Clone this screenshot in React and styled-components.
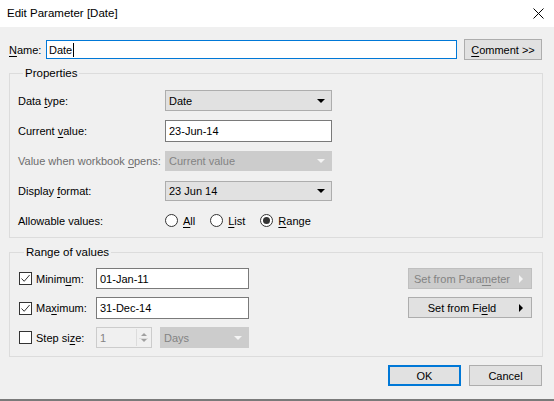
import React from 'react'
import styled, { createGlobalStyle } from 'styled-components'

const GlobalStyle = createGlobalStyle`
  html, body {
    margin: 0;
    padding: 0;
    background: #ffffff;
  }
  body {
    font-family: "Segoe UI", "Liberation Sans", Arial, sans-serif;
    font-size: 11px;
    color: #000;
  }
  * { box-sizing: border-box; }
`

const Window = styled.div`
  width: 554px;
  height: 401px;
  overflow: hidden;
  display: flex;
  flex-direction: column;
  border-bottom: 2px solid #7a7a7a;
  white-space: nowrap;
`

const TitleBar = styled.div`
  height: 27px;
  flex: none;
  background: #fff;
  display: flex;
  align-items: center;
  justify-content: space-between;
  padding: 0 10px 1px 7px;
  font-size: 11.5px;
`

const Body = styled.div`
  flex: 1;
  background: #f0f0f0;
  padding: 12px 11px 0 9px;
  display: flex;
  flex-direction: column;
`

const NameRow = styled.div`
  display: flex;
  align-items: center;
  height: 21px;
`

const NameLabel = styled.label`
  width: 37px;
`

const TextBox = styled.div`
  height: ${p => p.$h || 21}px;
  width: ${p => p.$w}px;
  background: ${p => (p.$disabled ? '#f0f0f0' : '#fff')};
  border: 1px solid ${p => (p.$focus ? '#0078d7' : p.$disabled ? '#cccccc' : '#7a7a7a')};
  color: ${p => (p.$disabled ? '#838383' : '#000')};
  display: flex;
  align-items: center;
  padding-left: ${p => (p.$focus ? 2 : 3)}px;
  position: relative;
  flex: none;
`

const Caret = styled.span`
  display: inline-block;
  width: 1px;
  height: 14px;
  background: #000;
  margin-left: 1px;
`

const Button = styled.div`
  width: ${p => p.$w}px;
  height: 21px;
  flex: none;
  background: ${p => (p.$disabled ? '#cccccc' : '#e1e1e1')};
  border: ${p => (p.$default ? '2px solid #0078d7' : `1px solid ${p.$disabled ? '#bfbfbf' : '#adadad'}`)};
  color: ${p => (p.$disabled ? '#838383' : '#000')};
  display: flex;
  align-items: center;
  justify-content: center;
  padding-right: ${p => (p.$menu ? 16 : 0)}px;
  position: relative;
`

const ButtonArrow = styled.span`
  position: absolute;
  right: 8px;
  top: 50%;
  margin-top: -4px;
  width: 0;
  height: 0;
  border-top: 4px solid transparent;
  border-bottom: 4px solid transparent;
  border-left: 4px solid ${p => (p.$disabled ? '#f4f4f4' : '#000')};
`

const Group = styled.fieldset`
  margin: ${p => p.$top}px 0 0 0;
  border: 1px solid #dcdcdc;
  padding: ${p => p.$pad};
  min-width: 0;
`

const Legend = styled.legend`
  margin-left: 5px;
  padding: 0 2px;
  line-height: 16px;
  font-size: 11.5px;
`

const PropRows = styled.div`
  display: flex;
  flex-direction: column;
  gap: 9px;
`

const PropRow = styled.div`
  display: grid;
  grid-template-columns: 147px 167px;
  align-items: center;
  height: 21px;
  color: ${p => (p.$disabled ? '#6d6d6d' : '#000')};
`

const Select = styled.div`
  height: ${p => p.$h || 21}px;
  width: ${p => (p.$w ? `${p.$w}px` : '100%')};
  flex: none;
  background: ${p => (p.$disabled ? '#cccccc' : '#e1e1e1')};
  border: 1px solid ${p => (p.$disabled ? '#cccccc' : '#adadad')};
  color: ${p => (p.$disabled ? '#838383' : '#000')};
  display: flex;
  align-items: center;
  justify-content: space-between;
  padding: 0 6px 0 3px;
`

const SelectArrow = styled.span`
  width: 0;
  height: 0;
  border-left: 4px solid transparent;
  border-right: 4px solid transparent;
  border-top: 4px solid ${p => (p.$disabled ? '#f4f4f4' : '#000')};
  margin-top: 1px;
`

const Radios = styled.div`
  display: flex;
  align-items: center;
  gap: 15px;
`

const RadioItem = styled.span`
  display: flex;
  align-items: center;
  gap: 5px;
`

const RadioCircle = styled.span`
  width: 13px;
  height: 13px;
  border-radius: 50%;
  border: 1px solid #333;
  background: #fff;
  display: flex;
  align-items: center;
  justify-content: center;
  &::after {
    content: '';
    width: 7px;
    height: 7px;
    border-radius: 50%;
    background: ${p => (p.$on ? '#333' : 'transparent')};
  }
`

const RangeBody = styled.div`
  display: flex;
  justify-content: space-between;
`

const RangeRows = styled.div`
  display: flex;
  flex-direction: column;
  gap: 8.5px;
`

const RangeRow = styled.div`
  display: flex;
  align-items: center;
  height: 21px;
`

const CheckCell = styled.label`
  width: 77px;
  display: flex;
  align-items: center;
  gap: 4px;
`

const CheckBox = styled.span`
  width: 13px;
  height: 13px;
  border: 1px solid #333;
  background: #fff;
  display: flex;
  align-items: center;
  justify-content: center;
`

const StepControls = styled.div`
  display: flex;
  gap: 8px;
`

const Spin = styled.span`
  position: absolute;
  right: 1px;
  top: 1px;
  bottom: 1px;
  width: 14px;
  border-left: 1px solid #dcdcdc;
  display: flex;
  flex-direction: column;
  align-items: center;
  justify-content: center;
  gap: 3px;
`

const SpinLine = styled.span`
  position: absolute;
  left: 2px;
  right: 2px;
  top: 50%;
  height: 1px;
  background: #dcdcdc;
`

const SpinTri = styled.span`
  width: 0;
  height: 0;
  border-left: 3px solid transparent;
  border-right: 3px solid transparent;
  ${p => (p.$up ? 'border-bottom: 3px solid #a0a0a0;' : 'border-top: 3px solid #a0a0a0;')}
`

const RangeButtons = styled.div`
  display: flex;
  flex-direction: column;
  gap: 8px;
`

const Footer = styled.div`
  display: flex;
  justify-content: flex-end;
  gap: 8px;
  margin-top: 8px;
  padding-right: 1px;
`

const U = styled.span`
  text-decoration: underline;
  text-underline-offset: 2px;
`

const Check = () => (
  <svg width="11" height="11" viewBox="0 0 11 11">
    <polyline points="1.5,5.5 4.2,8.3 9.6,2" fill="none" stroke="#333" strokeWidth="1" />
  </svg>
)

const CloseIcon = () => (
  <svg width="11" height="11" viewBox="0 0 11 11">
    <path d="M0.5 0.5 L10.5 10.5 M10.5 0.5 L0.5 10.5" stroke="#000" strokeWidth="1" />
  </svg>
)

export default function App() {
  return (
    <>
      <GlobalStyle />
      <Window>
        <TitleBar>
          <span>Edit Parameter [Date]</span>
          <CloseIcon />
        </TitleBar>
        <Body>
          <NameRow>
            <NameLabel><U>N</U>ame:</NameLabel>
            <TextBox $w={411} $h={19} $focus>
              Date<Caret />
            </TextBox>
            <Button $w={78} style={{ marginLeft: 7 }}><span><U>C</U>omment &gt;&gt;</span></Button>
          </NameRow>

          <Group $top={5} $pad="9px 0 6px 8px">
            <Legend>Properties</Legend>
            <PropRows>
              <PropRow>
                <span>Data <U>t</U>ype:</span>
                <Select>Date<SelectArrow /></Select>
              </PropRow>
              <PropRow>
                <span>Current <U>v</U>alue:</span>
                <TextBox $w={167} $h={22}>23-Jun-14</TextBox>
              </PropRow>
              <PropRow $disabled>
                <span>Value when workbook <U>o</U>pens:</span>
                <Select $disabled $h={20}>Current value<SelectArrow $disabled /></Select>
              </PropRow>
              <PropRow>
                <span>Display <U>f</U>ormat:</span>
                <Select $h={20}>23 Jun 14<SelectArrow /></Select>
              </PropRow>
              <PropRow>
                <span>Allowable values:</span>
                <Radios>
                  <RadioItem><RadioCircle /><span><U>A</U>ll</span></RadioItem>
                  <RadioItem><RadioCircle /><span><U>L</U>ist</span></RadioItem>
                  <RadioItem><RadioCircle $on /><span><U>R</U>ange</span></RadioItem>
                </Radios>
              </PropRow>
            </PropRows>
          </Group>

          <Group $top={6} $pad="8px 10px 8px 9px">
            <Legend>Range of values</Legend>
            <RangeBody>
              <RangeRows>
                <RangeRow>
                  <CheckCell><CheckBox><Check /></CheckBox><span>Minim<U>u</U>m:</span></CheckCell>
                  <TextBox $w={153}>01-Jan-11</TextBox>
                </RangeRow>
                <RangeRow>
                  <CheckCell><CheckBox><Check /></CheckBox><span>Ma<U>x</U>imum:</span></CheckCell>
                  <TextBox $w={153} $h={22}>31-Dec-14</TextBox>
                </RangeRow>
                <RangeRow>
                  <CheckCell><CheckBox /><span>Step si<U>z</U>e:</span></CheckCell>
                  <StepControls>
                    <TextBox $w={56} $disabled>
                      1
                      <Spin>
                        <SpinLine />
                        <SpinTri $up />
                        <SpinTri />
                      </Spin>
                    </TextBox>
                    <Select $w={89} $disabled>Days<SelectArrow $disabled /></Select>
                  </StepControls>
                </RangeRow>
              </RangeRows>
              <RangeButtons>
                <Button $w={124} $disabled $menu>
                  <span>Set from Para<U>m</U>eter</span>
                  <ButtonArrow $disabled />
                </Button>
                <Button $w={124} $menu>
                  <span>Set from Fi<U>e</U>ld</span>
                  <ButtonArrow />
                </Button>
              </RangeButtons>
            </RangeBody>
          </Group>

          <Footer>
            <Button $w={73} $default>OK</Button>
            <Button $w={73}>Cancel</Button>
          </Footer>
        </Body>
      </Window>
    </>
  )
}
